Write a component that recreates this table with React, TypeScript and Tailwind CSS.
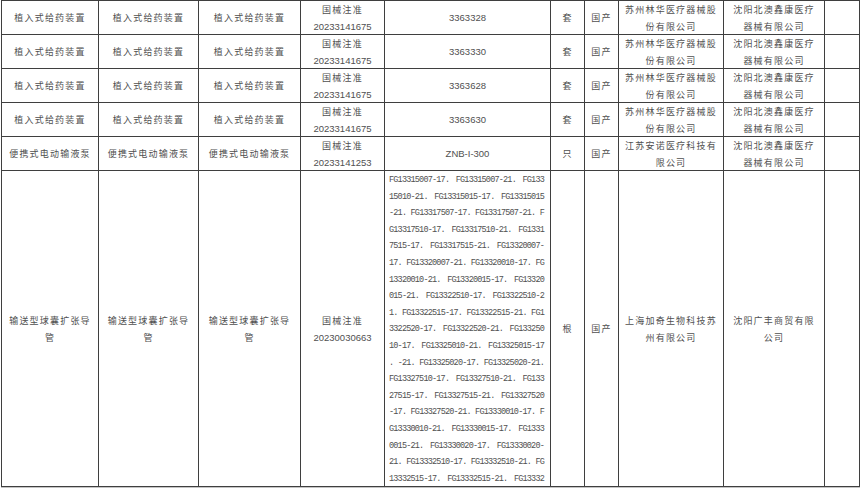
import React from "react";

const CJK = "font-['Noto_Sans_CJK_SC',sans-serif] text-[9px] tracking-[1.2px] leading-[17px] whitespace-nowrap";
const NUM = "font-['Liberation_Sans','Noto_Sans_CJK_SC',sans-serif] text-[9.5px] leading-[17px] whitespace-nowrap";
const CELL = "bg-white flex flex-col items-center justify-center text-center text-[#505050] overflow-hidden";

type Row = {
  name: string[];
  reg: string;
  model: string | null;
  unit: string;
  maker: string[];
  dealer: string[];
};

const rows: Row[] = [
  { name: ["植入式给药装置"], reg: "20233141675", model: "3363328", unit: "套", maker: ["苏州林华医疗器械股", "份有限公司"], dealer: ["沈阳北澳鑫康医疗", "器械有限公司"] },
  { name: ["植入式给药装置"], reg: "20233141675", model: "3363330", unit: "套", maker: ["苏州林华医疗器械股", "份有限公司"], dealer: ["沈阳北澳鑫康医疗", "器械有限公司"] },
  { name: ["植入式给药装置"], reg: "20233141675", model: "3363628", unit: "套", maker: ["苏州林华医疗器械股", "份有限公司"], dealer: ["沈阳北澳鑫康医疗", "器械有限公司"] },
  { name: ["植入式给药装置"], reg: "20233141675", model: "3363630", unit: "套", maker: ["苏州林华医疗器械股", "份有限公司"], dealer: ["沈阳北澳鑫康医疗", "器械有限公司"] },
  { name: ["便携式电动输液泵"], reg: "20233141253", model: "ZNB-I-300", unit: "只", maker: ["江苏安诺医疗科技有", "限公司"], dealer: ["沈阳北澳鑫康医疗", "器械有限公司"] },
  { name: ["输送型球囊扩张导", "管"], reg: "20230030663", model: null, unit: "根", maker: ["上海加奇生物科技苏", "州有限公司"], dealer: ["沈阳广丰商贸有限", "公司"] },
];

const fgLines = [
  "FG13315007-17. FG13315007-21. FG133",
  "15010-21. FG13315015-17. FG13315015",
  "-21. FG13317507-17. FG13317507-21. F",
  "G13317510-17. FG13317510-21. FG1331",
  "7515-17. FG13317515-21. FG13320007-",
  "17. FG13320007-21. FG13320010-17. FG",
  "13320010-21. FG13320015-17. FG13320",
  "015-21. FG13322510-17. FG13322510-2",
  "1. FG13322515-17. FG13322515-21. FG1",
  "3322520-17. FG13322520-21. FG133250",
  "10-17. FG13325010-21. FG13325015-17",
  ". -21. FG13325020-17. FG13325020-21.",
  "FG13327510-17. FG13327510-21. FG133",
  "27515-17. FG13327515-21. FG13327520",
  "-17. FG13327520-21. FG13330010-17. F",
  "G13330010-21. FG13330015-17. FG1333",
  "0015-21. FG13330020-17. FG13330020-",
  "21. FG13332510-17. FG13332510-21. FG",
  "13332515-17. FG13332515-21. FG13332",
];

function Lines({ lines }: { lines: string[] }) {
  return (
    <>
      {lines.map((l, i) => (
        <div key={i} className={CJK}>
          {l}
        </div>
      ))}
    </>
  );
}

export default function App() {
  return (
    <div className="w-[860px] h-[488px] bg-white overflow-hidden">
      <div className="ml-px w-fit border-b border-[#c4c4c4]">
        <div className="grid grid-cols-[96px_99px_101px_83px_165px_33px_33px_104px_100px_34px] grid-rows-[33px_33px_33px_33px_33px_315px] gap-px bg-[#3f3f3f] p-px">
          {rows.map((r, i) => (
            <React.Fragment key={i}>
              <div className={CELL}><Lines lines={r.name} /></div>
              <div className={CELL}><Lines lines={r.name} /></div>
              <div className={CELL}><Lines lines={r.name} /></div>
              <div className={CELL}>
                <div className={CJK}>国械注准</div>
                <div className={NUM}>{r.reg}</div>
              </div>
              {r.model !== null ? (
                <div className={CELL}>
                  <div className={NUM}>{r.model}</div>
                </div>
              ) : (
                <div className="bg-white overflow-hidden pl-1 pt-[1px] text-[#505050]">
                  {fgLines.map((l, k) => (
                    <div
                      key={k}
                      className="w-[155px] whitespace-nowrap font-['Liberation_Mono',monospace] text-[8.5px] tracking-[-0.8px] leading-[16.6px] text-justify [text-align-last:justify]"
                    >
                      {l}
                    </div>
                  ))}
                </div>
              )}
              <div className={CELL}><div className={CJK}>{r.unit}</div></div>
              <div className={CELL}><div className={CJK}>国产</div></div>
              <div className={CELL}><Lines lines={r.maker} /></div>
              <div className={CELL}><Lines lines={r.dealer} /></div>
              <div className="bg-white" />
            </React.Fragment>
          ))}
        </div>
      </div>
    </div>
  );
}
